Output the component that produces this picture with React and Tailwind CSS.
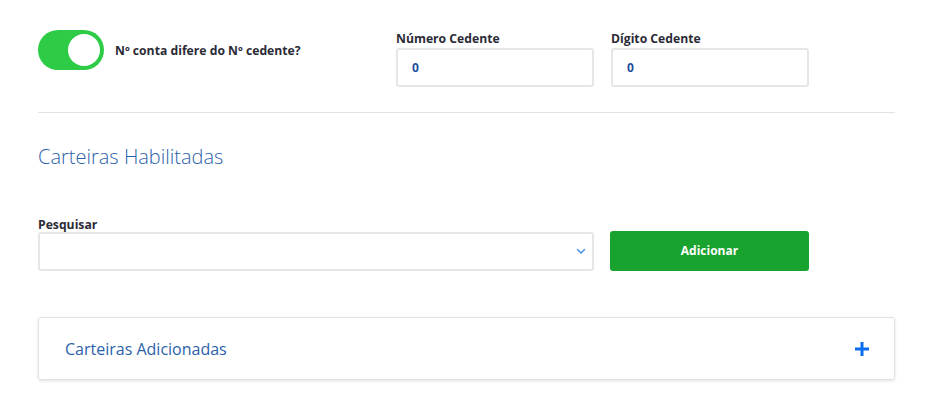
import React, { useState } from "react";

function Toggle({ on, onClick }) {
  return (
    <button
      onClick={onClick}
      className={`relative h-[40px] w-[66px] rounded-full transition-colors ${on ? "bg-[#2ecc46]" : "bg-gray-300"}`}
    >
      <span
        className={`absolute top-[4px] h-[32px] w-[32px] rounded-full bg-white transition-all ${on ? "left-[30px]" : "left-[4px]"}`}
      />
    </button>
  );
}

function Campo({ label, value }) {
  return (
    <div className="w-[198px]">
      <label className="block text-[12.2px] font-bold leading-[16px] text-[#2b2b36]">{label}</label>
      <div className="mt-[1px] flex h-[39px] items-center rounded-[3px] border-2 border-[#e6e6e6] px-[14px]">
        <span className="text-[12px] font-bold text-[#1d4f9c]">{value}</span>
      </div>
    </div>
  );
}

export default function App() {
  const [difere, setDifere] = useState(true);

  return (
    <div className="min-h-[418px] bg-white pl-[38px] pr-[39px] pt-[30px]" style={{ fontFamily: "'Open Sans', sans-serif" }}>
      <div className="flex">
        <div className="flex w-[358px] items-start">
          <Toggle on={difere} onClick={() => setDifere(!difere)} />
          <span className="ml-[11px] mt-[12px] text-[12.2px] font-bold text-[#2b2b36]">Nº conta difere do Nº cedente?</span>
        </div>
        <div className="flex gap-[17px] pt-[1px]">
          <Campo label="Número Cedente" value="0" />
          <Campo label="Dígito Cedente" value="0" />
        </div>
      </div>

      <hr className="mt-[25px] border-t border-[#e3e3e3]" />

      <h2 className="mt-[30px] text-[20px] font-light leading-[28px] text-[#2c5fab]">Carteiras Habilitadas</h2>

      <div className="mt-[46px] flex items-end gap-[16px]">
        <div className="w-[556px]">
          <label className="block text-[12.2px] font-bold leading-[16px] text-[#2b2b36]">Pesquisar</label>
          <div className="mt-[-1px] flex h-[39px] items-center justify-end rounded-[3px] border-2 border-[#e6e6e6] pr-[6px]">
            <svg width="10" height="7" viewBox="0 0 10 7" fill="none">
              <path d="M1.5 1.5L5 5L8.5 1.5" stroke="#4d94e8" strokeWidth="1.6" strokeLinecap="round" strokeLinejoin="round" />
            </svg>
          </div>
        </div>
        <button className="h-[40px] w-[199px] rounded-[3px] bg-[#18a22e] text-[12px] font-bold text-white">Adicionar</button>
      </div>

      <div className="mt-[46px] flex h-[63px] items-center justify-between rounded-[3px] border border-[#e2e2e2] pl-[26px] pr-[24px] shadow-[0_1px_3px_rgba(0,0,0,0.12)]">
        <span className="text-[16px] text-[#2c5fab]">Carteiras Adicionadas</span>
        <svg width="16" height="16" viewBox="0 0 16 16">
          <path d="M8 1V15M1 8H15" stroke="#0a6df0" strokeWidth="3" />
        </svg>
      </div>
    </div>
  );
}
